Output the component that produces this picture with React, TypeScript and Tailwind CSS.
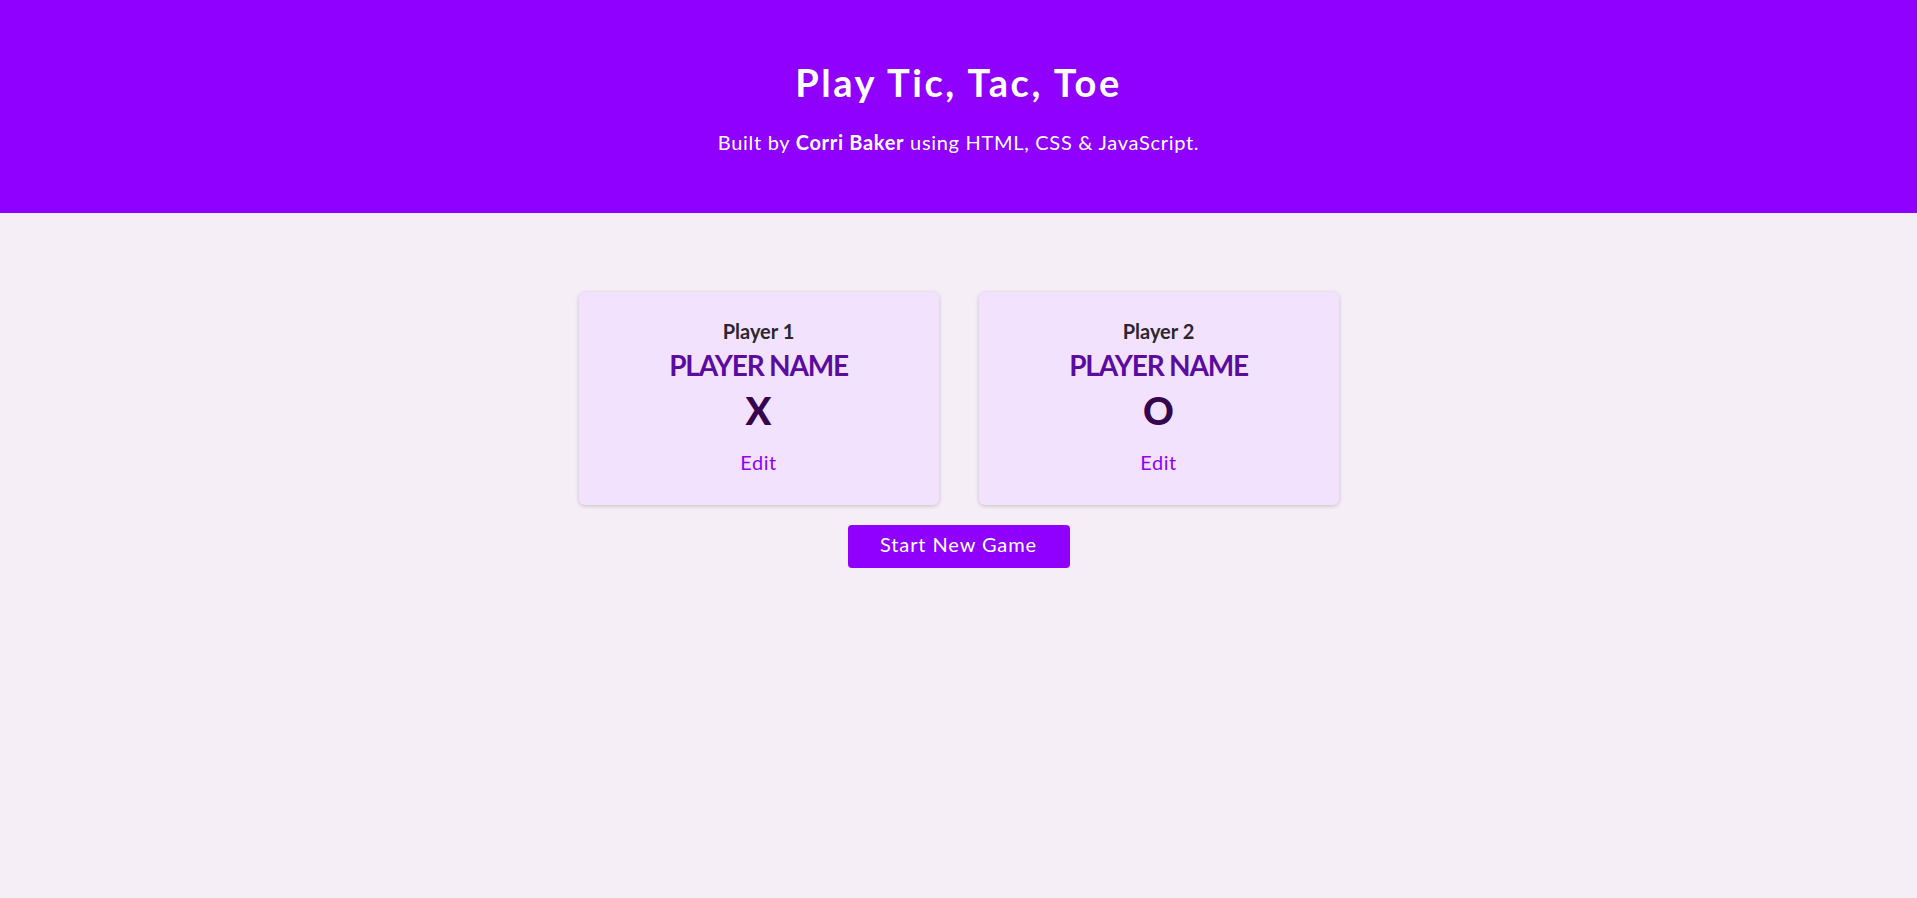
const players = [
  { label: "Player 1", symbol: "X" },
  { label: "Player 2", symbol: "O" },
];

export default function App() {
  return (
    <div className="min-h-[898px] bg-[#f5eef6] font-['Lato',sans-serif]">
      {/* Header */}
      <header className="flex h-[213px] flex-col items-center bg-[#9000ff] pt-[58px] text-white">
        <h1 className="text-[38px] font-bold leading-[48px] tracking-[2.6px]">Play Tic, Tac, Toe</h1>
        <p className="mt-[22px] text-[20px] leading-[28px] tracking-[0.7px]">
          Built by <span className="font-bold">Corri Baker</span> using HTML, CSS &amp; JavaScript.
        </p>
      </header>

      {/* Player config */}
      <main className="flex flex-col items-center pt-[79px]">
        <ol className="flex gap-10">
          {players.map((p) => (
            <li
              key={p.label}
              className="flex h-[213px] w-[360px] flex-col items-center rounded-md bg-[#f3e2fd] pt-[25px] shadow-[0_1px_4px_rgba(0,0,0,0.2)]"
            >
              <h2 className="text-[20px] font-bold leading-[28px] text-[#2b2630]">{p.label}</h2>
              <h3 className="mt-[3px] text-[28px] font-bold leading-[34px] tracking-[-1.2px] text-[#5a0ca0]">
                PLAYER NAME
              </h3>
              <p className="mt-[6px] text-[38px] font-black leading-[44px] text-[#35064f]">{p.symbol}</p>
              <button className="mt-[16px] text-[20px] leading-[28px] tracking-[0.5px] text-[#9000ff]">Edit</button>
            </li>
          ))}
        </ol>
        <button className="mt-[20px] h-[43px] w-[222px] rounded-[4px] bg-[#9000ff] pb-[5px] text-[20px] tracking-[0.9px] text-white">
          Start New Game
        </button>
      </main>
    </div>
  );
}
